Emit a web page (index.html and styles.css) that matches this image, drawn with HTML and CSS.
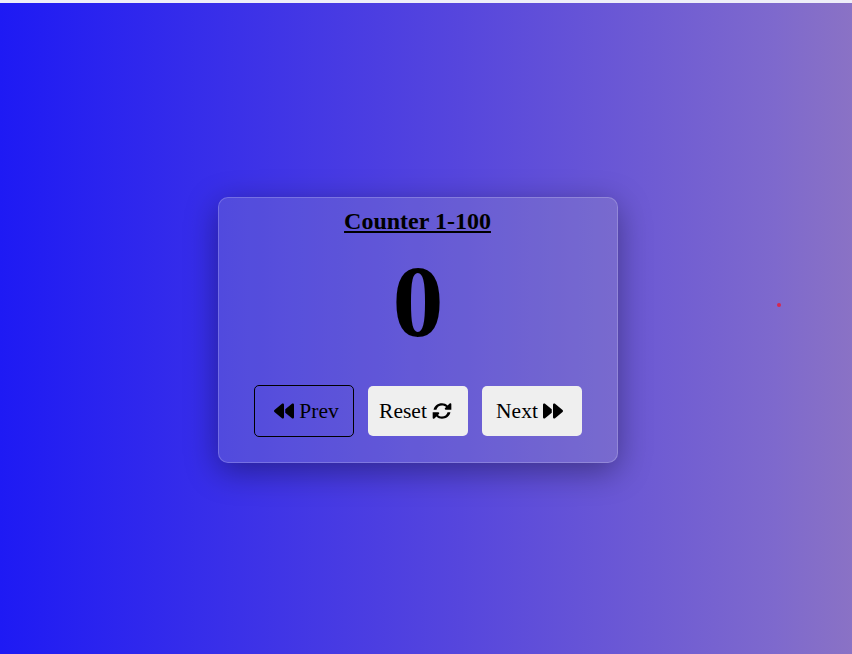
FILE: index.html
```html
<!DOCTYPE html>
<html lang="en">
<head>
<meta charset="utf-8">
<title>Counter</title>
<link rel="stylesheet" href="styles.css">
</head>
<body>
<main class="card">
  <h1 class="title">Counter 1-100</h1>
  <div class="count">0</div>
  <div class="actions">
    <button class="btn btn-prev"><svg class="icon icon-prev" viewBox="0 0 512 512"><path d="M459.500 440.600c9.500 7.900 22.800 9.700 34.100 4.400S512 428.400 512 416V96c0-12.400-7.200-23.700-18.400-29s-24.500-3.600-34.100 4.400L288 214.300V297.700L459.500 440.600zM256 352V256 128 96c0-12.400-7.200-23.700-18.400-29s-24.500-3.600-34.100 4.400l-192 160C4.200 237.500 0 246.500 0 256s4.200 18.500 11.500 24.600l192 160c9.500 7.900 22.800 9.700 34.100 4.400S256 428.400 256 416V352z"/></svg><span class="label">Prev</span></button>
    <button class="btn btn-reset"><span class="label">Reset</span><svg class="icon icon-reset" viewBox="0 0 512 512"><path d="M40 226C62 124 146 60 256 60c58 0 106 21 142 57l54-54c16-16 43-5 43 18v143H352c-23 0-34-27-18-43l25-25c-28-27-62-40-103-40-71 0-124 39-143 110zM472 286c-22 102-106 166-216 166-58 0-106-21-142-57l-54 54c-16 16-43 5-43-18V288h143c23 0 34 27 18 43l-25 25c28 27 62 40 103 40 71 0 124-39 143-110z"/></svg></button>
    <button class="btn btn-next"><span class="label">Next</span><svg class="icon icon-next" viewBox="0 0 512 512"><path d="M52.500 440.600c-9.500 7.900-22.800 9.700-34.100 4.400S0 428.400 0 416V96C0 83.600 7.200 72.300 18.400 67s24.500-3.600 34.100 4.400L224 214.300V297.700L52.500 440.600zM256 352V256 128 96c0-12.400 7.200-23.700 18.400-29s24.500-3.600 34.100 4.400l192 160c7.300 6.100 11.500 15.100 11.500 24.600s-4.200 18.500-11.500 24.600l-192 160c-9.500 7.900-22.800 9.700-34.100 4.400s-18.400-16.600-18.400-29V352z"/></svg></button>
  </div>
</main>
<i class="dot"></i>
</body>
</html>
```
FILE: styles.css
```css
* { box-sizing: border-box; }

body {
  margin: 0;
  height: 654px;
  overflow: hidden;
  display: flex;
  flex-direction: column;
  align-items: center;
  padding: 194px 16px 0 0;
  border-top: 3px solid #eeeef8;
  font-family: "Liberation Serif", serif;
  color: #000;
  background: linear-gradient(90deg, #1e1af4 0%, #5646dd 54%, #7e69cd 91%, #8a72c5 100%) border-box;
}

.card {
  width: 400px;
  height: 266px;
  display: flex;
  flex-direction: column;
  align-items: center;
  border: 1px solid rgba(255, 255, 255, 0.2);
  border-radius: 10px;
  background: rgba(180, 186, 178, 0.2);
  box-shadow: 0 8px 32px rgba(0, 0, 0, 0.37);
}

.title {
  margin: 10px 1px 0 0;
  font-size: 24px;
  line-height: 27px;
  text-decoration: underline;
}

.count {
  margin-top: 9px;
  font-size: 102px;
  font-weight: bold;
  line-height: 115px;
}

.actions {
  display: flex;
  align-items: center;
  gap: 14px;
  margin-top: 26px;
}

.btn {
  width: 100px;
  height: 50px;
  padding: 0;
  display: flex;
  align-items: center;
  justify-content: center;
  gap: 5px;
  border: 0;
  border-radius: 5px;
  background: #efefef;
  color: #000;
  font: 21.5px "Liberation Serif", serif;
}

.btn-prev {
  height: 52px;
  border: 1px solid #000;
  background: transparent;
  padding-left: 5px;
}

.btn-reset { padding-right: 5px; }
.btn-next { padding-right: 5px; }

.icon {
  width: 20px;
  height: 20px;
  fill: currentColor;
}

.dot {
  position: absolute;
  left: 777px;
  top: 303px;
  width: 4px;
  height: 4px;
  border-radius: 50%;
  background: #d72850;
}
```
